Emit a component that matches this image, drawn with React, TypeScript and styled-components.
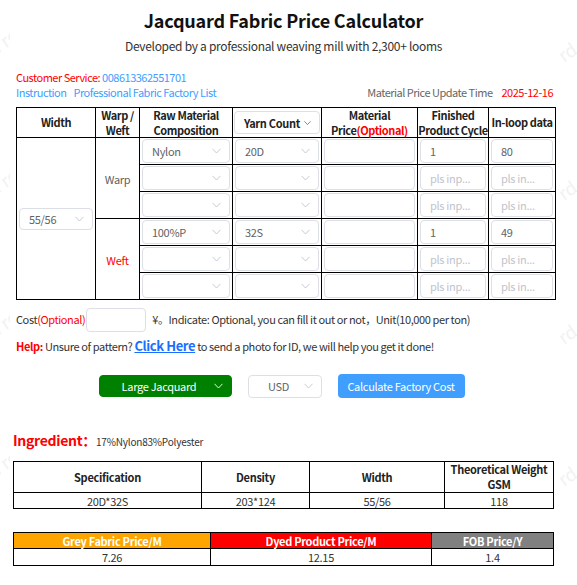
import React from "react";
import styled, { createGlobalStyle } from "styled-components";

const GlobalStyle = createGlobalStyle`
  html, body {
    margin: 0;
    padding: 0;
    background: #fff;
  }
  body {
    font-family: "Noto Sans CJK SC", "Noto Sans", sans-serif;
    color: #333;
    line-height: 1.25;
  }
  * {
    box-sizing: border-box;
  }
`;

const Page = styled.div`
  position: relative;
  width: 577px;
  min-height: 585px;
  overflow: hidden;
`;

const Watermarks = styled.div`
  position: absolute;
  inset: 0;
  z-index: 0;
  pointer-events: none;
`;

const Mark = styled.span<{ $top: number; $left: number }>`
  position: absolute;
  top: ${(p) => p.$top}px;
  left: ${(p) => p.$left}px;
  transform: rotate(-35deg);
  font-size: 18px;
  color: #f2f2f2;
  white-space: nowrap;
`;

const Panel = styled.main`
  position: relative;
  z-index: 1;
  background: #fff;
  margin-left: 10px;
  width: 547px;
  padding-top: 8px;
`;

const Title = styled.h1`
  margin: 0;
  font-size: 18px;
  line-height: 24px;
  font-weight: 700;
  letter-spacing: -0.2px;
  color: #111;
  text-align: center;
`;

const Subtitle = styled.p`
  margin: 5px 0 0;
  font-size: 12px;
  line-height: 18px;
  letter-spacing: -0.3px;
  color: #333;
  text-align: center;
`;

const InfoBlock = styled.div`
  margin: 15px 0 0;
  padding: 0 4px 0 6px;
  font-size: 11px;
  line-height: 15px;
  letter-spacing: -0.5px;
`;

const InfoRow = styled.div`
  display: flex;
  justify-content: space-between;
  align-items: center;
`;

const Red = styled.span`
  color: #ff0000;
`;

const Link = styled.a`
  color: #409eff;
  text-decoration: none;
  margin-right: 7px;
`;

const Muted = styled.span`
  color: #666;
  margin-right: 9px;
`;

const Top = styled.section`
  padding: 0 2px 0 6px;
`;

const CalcTable = styled.table`
  margin-top: 7px;
  width: 539px;
  border-collapse: collapse;
  table-layout: fixed;
  th,
  td {
    border: 1px solid #000;
    padding: 1px 2px;
    text-align: center;
    vertical-align: middle;
  }
  th {
    height: 30px;
    padding: 0;
    font-size: 11px;
    line-height: 14.5px;
    font-weight: 700;
    letter-spacing: -0.4px;
    color: #222;
    white-space: nowrap;
  }
  td {
    height: 27px;
    line-height: 14px;
  }
`;

const GroupLabel = styled.span<{ $red?: boolean }>`
  font-size: 11px;
  letter-spacing: -0.3px;
  color: ${(p) => (p.$red ? "#ff0000" : "#606266")};
`;

const Field = styled.div<{ $placeholder?: boolean }>`
  height: 24px;
  border: 1px solid #dcdfe6;
  border-radius: 4px;
  background: #fff;
  display: flex;
  align-items: center;
  padding: 0 9px;
  font-size: 11px;
  line-height: 22px;
  letter-spacing: -0.3px;
  color: ${(p) => (p.$placeholder ? "#c0c4cc" : "#606266")};
  text-align: left;
  white-space: nowrap;
  overflow: hidden;
`;

const SelectBox = styled.div<{ $variant?: "plain" | "head" | "green"; $w?: number; $h?: number }>`
  height: ${(p) => p.$h ?? 24}px;
  width: ${(p) => (p.$w ? `${p.$w}px` : "auto")};
  border: 1px solid ${(p) => (p.$variant === "green" ? "#008000" : "#dcdfe6")};
  border-radius: 4px;
  background: ${(p) => (p.$variant === "green" ? "#008000" : "#fff")};
  color: ${(p) =>
    p.$variant === "green" ? "#fff" : p.$variant === "head" ? "#222" : "#606266"};
  font-weight: ${(p) => (p.$variant === "head" ? 700 : 400)};
  font-size: 11px;
  line-height: 14px;
  letter-spacing: -0.3px;
  display: flex;
  align-items: center;
  justify-content: space-between;
  gap: 4px;
  padding: 0 8px 0 9px;
  white-space: nowrap;
`;

const SelectText = styled.span<{ $center?: boolean }>`
  flex: 1;
  text-align: ${(p) => (p.$center ? "center" : "left")};
`;

const Chevron = ({ color = "#c0c4cc" }: { color?: string }) => (
  <svg width="9" height="6" viewBox="0 0 9 6" fill="none">
    <path d="M0.5 0.8 L4.5 5 L8.5 0.8" stroke={color} strokeWidth="0.9" />
  </svg>
);

interface ISelectProps {
  value?: string;
  variant?: "plain" | "head" | "green";
  width?: number;
  height?: number;
  center?: boolean;
}

const Select = ({ value = "", variant = "plain", width, height, center }: ISelectProps) => (
  <SelectBox $variant={variant} $w={width} $h={height}>
    <SelectText $center={center}>{value}</SelectText>
    <Chevron color={variant === "green" ? "#fff" : variant === "head" ? "#555" : "#c0c4cc"} />
  </SelectBox>
);

const CostRow = styled.div`
  margin-top: 8px;
  display: flex;
  align-items: center;
  font-size: 11px;
  letter-spacing: -0.4px;
  color: #333;
  height: 24px;
`;

const CostInput = styled.div`
  width: 60px;
  height: 24px;
  border: 1px solid #dcdfe6;
  border-radius: 4px;
  margin: 0 6px 0 1px;
`;

const HelpRow = styled.p`
  margin: 6px 0 0;
  font-size: 11px;
  line-height: 16px;
  letter-spacing: -0.4px;
  color: #333;
`;

const HelpLabel = styled.b`
  color: #ff0000;
`;

const ClickHere = styled.a`
  color: #1a6fff;
  font-weight: 700;
  font-size: 13px;
  text-decoration: underline;
`;

const Actions = styled.div`
  margin-top: 20px;
  display: flex;
  justify-content: center;
  align-items: center;
  gap: 16px;
  padding-right: 8px;
`;

const CalcButton = styled.button`
  height: 24px;
  width: 127px;
  border: none;
  border-radius: 4px;
  background: #409eff;
  color: #fff;
  font-family: inherit;
  font-size: 11px;
  letter-spacing: -0.3px;
  padding: 0;
`;

const Bottom = styled.section`
  padding: 0 4px 0 3px;
`;

const Ingredient = styled.div`
  margin-top: 32px;
  display: flex;
  align-items: baseline;
  line-height: 20px;
`;

const IngredientLabel = styled.span`
  color: #ff0000;
  font-weight: 700;
  font-size: 14px;
  letter-spacing: -0.3px;
`;

const IngredientValue = styled.span`
  font-size: 10px;
  letter-spacing: -0.2px;
  color: #333;
`;

const ResultTable = styled.table<{ $mt: number }>`
  margin-top: ${(p) => p.$mt}px;
  width: 540px;
  border-collapse: collapse;
  table-layout: fixed;
  th,
  td {
    border: 1px solid #000;
    padding: 0;
    text-align: center;
    font-size: 11px;
    letter-spacing: -0.3px;
    white-space: nowrap;
  }
  th {
    font-weight: 700;
    line-height: 14px;
  }
  td {
    height: 16px;
    line-height: 14px;
    color: #333;
  }
`;

const SpecHead = styled.th`
  height: 31px;
  color: #222;
  && {
    line-height: 15px;
  }
`;

const PriceHead = styled.th<{ $bg: string }>`
  height: 16px;
  background: ${(p) => p.$bg};
  color: #fff;
`;

const PriceCell = styled.td`
  && {
    height: 17px;
  }
`;

type Row = {
  material: string;
  count: string;
  cycle: string;
  loop: string;
};

const warpRows: Row[] = [
  { material: "Nylon", count: "20D", cycle: "1", loop: "80" },
  { material: "", count: "", cycle: "", loop: "" },
  { material: "", count: "", cycle: "", loop: "" },
];

const weftRows: Row[] = [
  { material: "100%P", count: "32S", cycle: "1", loop: "49" },
  { material: "", count: "", cycle: "", loop: "" },
  { material: "", count: "", cycle: "", loop: "" },
];

const marks = [
  { top: 32, left: -20 },
  { top: 172, left: -20 },
  { top: 314, left: -20 },
  { top: 454, left: -20 },
  { top: 34, left: 556 },
  { top: 172, left: 556 },
  { top: 316, left: 556 },
  { top: 458, left: 556 },
];

const RowCells = ({ row }: { row: Row }) => (
  <>
    <td>
      <Select value={row.material} />
    </td>
    <td>
      <Select value={row.count} />
    </td>
    <td>
      <Field />
    </td>
    <td>
      <Field $placeholder={!row.cycle}>{row.cycle || "pls inp..."}</Field>
    </td>
    <td>
      <Field $placeholder={!row.loop}>{row.loop || "pls in..."}</Field>
    </td>
  </>
);

const App = () => {
  return (
    <Page>
      <GlobalStyle />
      <Watermarks>
        {marks.map((m, i) => (
          <Mark key={i} $top={m.top} $left={m.left}>
            rd rd
          </Mark>
        ))}
      </Watermarks>
      <Panel>
        <Title>Jacquard Fabric Price Calculator</Title>
        <Subtitle>Developed by a professional weaving mill with 2,300+ looms</Subtitle>
        <InfoBlock>
          <div>
            <Red>Customer Service: </Red>
            <Link as="span">008613362551701</Link>
          </div>
          <InfoRow>
            <div>
              <Link>Instruction</Link>
              <Link>Professional Fabric Factory List</Link>
            </div>
            <div>
              <Muted>Material Price Update Time</Muted>
              <Red>2025-12-16</Red>
            </div>
          </InfoRow>
        </InfoBlock>

        <Top>
          <CalcTable>
            <colgroup>
              <col style={{ width: 79 }} />
              <col style={{ width: 44 }} />
              <col style={{ width: 93 }} />
              <col style={{ width: 89 }} />
              <col style={{ width: 96 }} />
              <col style={{ width: 71 }} />
              <col style={{ width: 67 }} />
            </colgroup>
            <thead>
              <tr>
                <th>Width</th>
                <th>
                  Warp /<br />
                  Weft
                </th>
                <th>
                  Raw Material
                  <br />
                  Composition
                </th>
                <th style={{ padding: "0 1px" }}>
                  <Select value="Yarn Count" variant="head" height={23} center />
                </th>
                <th>
                  Material
                  <br />
                  Price<Red>(Optional)</Red>
                </th>
                <th>
                  Finished
                  <br />
                  Product Cycle
                </th>
                <th>In-loop data</th>
              </tr>
            </thead>
            <tbody>
              {warpRows.map((row, i) => (
                <tr key={`warp-${i}`}>
                  {i === 0 && (
                    <td rowSpan={6}>
                      <Select value="55/56" height={22} />
                    </td>
                  )}
                  {i === 0 && (
                    <td rowSpan={3}>
                      <GroupLabel>Warp</GroupLabel>
                    </td>
                  )}
                  <RowCells row={row} />
                </tr>
              ))}
              {weftRows.map((row, i) => (
                <tr key={`weft-${i}`}>
                  {i === 0 && (
                    <td rowSpan={3}>
                      <GroupLabel $red>Weft</GroupLabel>
                    </td>
                  )}
                  <RowCells row={row} />
                </tr>
              ))}
            </tbody>
          </CalcTable>

          <CostRow>
            Cost<Red>(Optional)</Red>
            <CostInput />
            ¥。Indicate: Optional, you can fill it out or not，Unit(10,000 per ton)
          </CostRow>
          <HelpRow>
            <HelpLabel>Help:</HelpLabel> Unsure of pattern? <ClickHere>Click Here</ClickHere> to send a
            photo for ID, we will help you get it done!
          </HelpRow>

          <Actions>
            <Select value="Large Jacquard" variant="green" width={133} height={22} center />
            <Select value="USD" width={74} height={23} center />
            <CalcButton>Calculate Factory Cost</CalcButton>
          </Actions>
        </Top>

        <Bottom>
          <Ingredient>
            <IngredientLabel>Ingredient：</IngredientLabel>
            <IngredientValue>17%Nylon83%Polyester</IngredientValue>
          </Ingredient>

          <ResultTable $mt={9}>
            <colgroup>
              <col style={{ width: 188 }} />
              <col style={{ width: 108 }} />
              <col style={{ width: 135 }} />
              <col style={{ width: 109 }} />
            </colgroup>
            <thead>
              <tr>
                <SpecHead>Specification</SpecHead>
                <SpecHead>Density</SpecHead>
                <SpecHead>Width</SpecHead>
                <SpecHead>
                  Theoretical Weight
                  <br />
                  GSM
                </SpecHead>
              </tr>
            </thead>
            <tbody>
              <tr>
                <td>20D*32S</td>
                <td>203*124</td>
                <td>55/56</td>
                <td>118</td>
              </tr>
            </tbody>
          </ResultTable>

          <ResultTable $mt={23}>
            <colgroup>
              <col style={{ width: 197 }} />
              <col style={{ width: 221 }} />
              <col style={{ width: 122 }} />
            </colgroup>
            <thead>
              <tr>
                <PriceHead $bg="#ffa500">Grey Fabric Price/M</PriceHead>
                <PriceHead $bg="#ff0000">Dyed Product Price/M</PriceHead>
                <PriceHead $bg="#808080">FOB Price/Y</PriceHead>
              </tr>
            </thead>
            <tbody>
              <tr>
                <PriceCell>7.26</PriceCell>
                <PriceCell>12.15</PriceCell>
                <PriceCell>1.4</PriceCell>
              </tr>
            </tbody>
          </ResultTable>
        </Bottom>
      </Panel>
    </Page>
  );
};

export default App;
